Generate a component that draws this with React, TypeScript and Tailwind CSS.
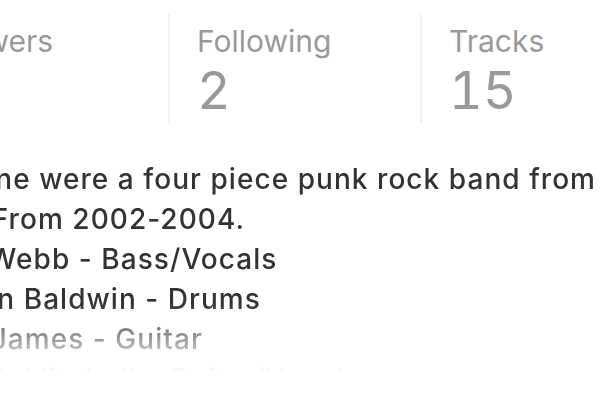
import React from "react";

const stats = [
  { label: "Followers", value: "48" },
  { label: "Following", value: "2" },
  { label: "Tracks", value: "15" },
];

const bio = [
  "Carbine were a four piece punk rock band from Hull. From 2002-2004.",
  "Paul Webb - Bass/Vocals",
  "Darren Baldwin - Drums",
  "Pete James - Guitar",
  "Gareth Mitchell - Guitar/Vocals",
];

const App: React.FC = () => {
  return (
    <div className="w-[600px] h-[400px] overflow-hidden bg-white font-['Inter',_sans-serif]">
      <div className="ml-[-82px] w-[760px]">
        <div className="flex">
          {stats.map((stat, index) => (
            <div
              key={stat.label}
              className={`shrink-0 pt-[9px] pb-[7px] mt-[14px] ${
                index === 0 ? "w-[250px]" : "w-[252px] border-l-2 border-[#f2f2f2] pl-[27px]"
              }`}
            >
              <div className="text-[30px] leading-[36px] text-[#999999]">{stat.label}</div>
              <div className="mt-[6px] text-[52px] leading-none tabular-nums text-[#999999]">
                {stat.value}
              </div>
            </div>
          ))}
        </div>

        <div className="mt-[35px] w-[700px] text-[28px] leading-[40px] tracking-[1.05px] font-medium text-[#333333] [-webkit-mask-image:linear-gradient(to_bottom,black_145px,transparent_213px)] [mask-image:linear-gradient(to_bottom,black_145px,transparent_213px)]">
          {bio.map((line) => (
            <p key={line}>{line}</p>
          ))}
        </div>
      </div>
    </div>
  );
};

export default App;
